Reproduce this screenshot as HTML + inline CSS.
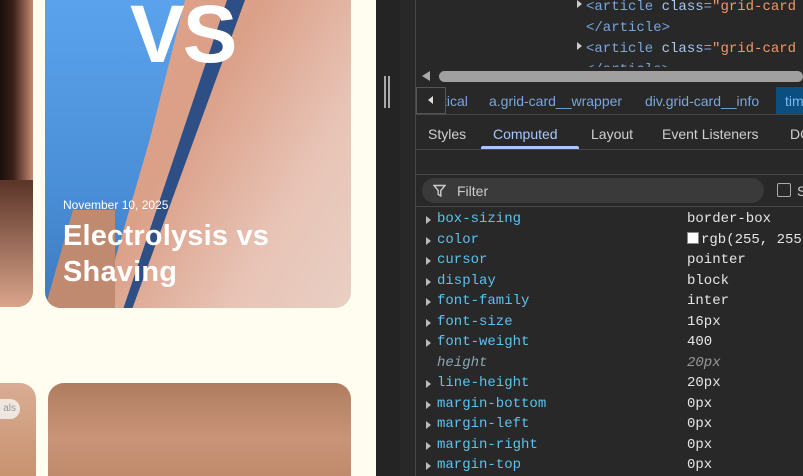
<!DOCTYPE html>
<html style="overflow:hidden;width:803px;height:476px"><head><style>
*{margin:0;padding:0;box-sizing:border-box}
body{width:803px;height:476px;overflow:hidden;background:#fffdf0;position:relative;font-family:"Liberation Sans",sans-serif}
.a{position:absolute}
.mono{font-family:"Liberation Mono","DejaVu Sans Mono",monospace;font-size:14px}
.row{position:absolute;left:416px;width:387px;height:20px}
.row .t{position:absolute;left:10px;top:6px;width:0;height:0;border-left:5px solid #bbb;border-top:4px solid transparent;border-bottom:4px solid transparent}
.row .p{position:absolute;left:21px;top:1px;color:#5cc3ef}
.row .v{position:absolute;left:271px;top:1px;color:#e6e6e6}
</style></head><body>
<div class="a" style="left:0;top:0;width:33px;height:307px;border-radius:0 0 16px 0;background:linear-gradient(90deg,#1a0f0b 0%,#3a2018 40%,#c48a70 100%);overflow:hidden">
<div class="a" style="left:0;top:180px;width:33px;height:127px;background:linear-gradient(180deg,#5a3428,#d9a48a)"></div></div>
<div class="a" style="left:45px;top:0;width:306px;height:308px;border-radius:0 0 16px 16px;overflow:hidden;background:linear-gradient(120deg,#e0a38a 0%,#dba088 45%,#e8c4b6 75%,#e9cfc4 100%)">
<div class="a" style="left:0;top:0;width:140px;height:308px;background:linear-gradient(180deg,#5aa3ec,#4a8fd8 60%,#3d7ac0);clip-path:polygon(0 0,100% 0,75% 45%,40% 100%,0 100%)"></div>
<div class="a" style="left:0;top:210px;width:70px;height:98px;background:#c08a70;clip-path:polygon(40% 0,100% 0,100% 100%,0 100%)"></div>
<div class="a" style="left:50px;top:0;width:150px;height:308px;background:#2e4e86;clip-path:polygon(88% 0,100% 0,25% 100%,19% 100%)"></div>
<div class="a" style="left:85px;top:-20px;font-size:82px;font-weight:bold;color:#fff;letter-spacing:-2px;line-height:110px">VS</div>
<div class="a" style="left:18px;top:198px;color:#fff;font-size:12px">November 10, 2025</div>
<div class="a" style="left:18px;top:218px;color:#fff;font-size:29px;font-weight:bold;line-height:36px;letter-spacing:0.2px">Electrolysis vs<br>Shaving</div>
</div>
<div class="a" style="left:-20px;top:383px;width:56px;height:93px;border-radius:16px 16px 0 0;background:linear-gradient(180deg,#d9ad94,#c8936f)"></div>
<div class="a" style="left:-10px;top:399px;width:30px;height:20px;border-radius:10px;background:#efe6e0;color:#999;font-size:10px;line-height:20px;text-align:right;padding-right:4px">als</div>
<div class="a" style="left:48px;top:383px;width:303px;height:93px;border-radius:16px 16px 0 0;background:linear-gradient(180deg,#b07c60,#c99478 60%,#c08a6c)"></div>
<div class="a" style="left:376px;top:0;width:427px;height:476px;background:#282828"></div>
<div class="a" style="left:376px;top:0;width:24px;height:476px;background:#242424"></div>
<div class="a" style="left:384px;top:76px;width:2px;height:32px;background:#aaa"></div>
<div class="a" style="left:388px;top:76px;width:2px;height:32px;background:#aaa"></div>
<div class="a" style="left:415px;top:0;width:1px;height:476px;background:#474747"></div>
<div class="a mono" style="left:586px;top:-3px;color:#7aa6da;white-space:nowrap;line-height:21px;font-size:14px;height:70px;overflow:hidden">
<div>&lt;article <span style="color:#a8c8f0">class</span>=<span style="color:#f29766">"grid-card s</span></div>
<div>&lt;/article&gt;</div>
<div>&lt;article <span style="color:#a8c8f0">class</span>=<span style="color:#f29766">"grid-card b</span></div>
<div>&lt;/article&gt;</div></div>
<div class="a" style="left:577px;top:0;border-left:5px solid #ccc;border-top:4px solid transparent;border-bottom:4px solid transparent"></div>
<div class="a" style="left:577px;top:42px;border-left:5px solid #ccc;border-top:4px solid transparent;border-bottom:4px solid transparent"></div>
<div class="a" style="left:416px;top:68px;width:387px;height:18px;background:#282828"></div>
<div class="a" style="left:422px;top:71px;border-right:8px solid #aaa;border-top:5px solid transparent;border-bottom:5px solid transparent"></div>
<div class="a" style="left:439px;top:71px;width:364px;height:11px;border-radius:6px;background:#a0a0a0"></div>
<div class="a" style="left:416px;top:87px;width:387px;height:28px;background:#282828;border-bottom:1px solid #474747;font-size:14px;white-space:nowrap">
<span class="a" style="left:27px;top:6px;color:#7aa6da">tical</span>
<div class="a" style="left:0;top:0;width:30px;height:27px;border:1px solid #555;background:#282828"></div>
<div class="a" style="left:12px;top:9px;border-right:5px solid #ddd;border-top:4px solid transparent;border-bottom:4px solid transparent"></div>
<span class="a" style="left:73px;top:6px;color:#7aa6da">a.grid-card__wrapper</span>
<span class="a" style="left:229px;top:6px;color:#7aa6da">div.grid-card__info</span>
<div class="a" style="left:360px;top:0;width:27px;height:27px;background:#0a4f80;color:#7ab8f0;padding:6px 0 0 9px;overflow:hidden">tim</div></div>
<div class="a" style="left:416px;top:116px;width:387px;height:34px;border-bottom:1px solid #474747;font-size:14px;color:#d0d0d0;white-space:nowrap;overflow:hidden">
<span class="a" style="left:12px;top:10px">Styles</span>
<span class="a" style="left:77px;top:10px;color:#a8c7fa">Computed</span>
<div class="a" style="left:65px;top:30px;width:98px;height:3px;border-radius:2px 2px 0 0;background:#a8c7fa"></div>
<span class="a" style="left:175px;top:10px">Layout</span>
<span class="a" style="left:246px;top:10px">Event Listeners</span>
<span class="a" style="left:374px;top:10px">DO</span></div>
<div class="a" style="left:416px;top:174px;width:387px;height:1px;background:#474747"></div>
<div class="a" style="left:422px;top:178px;width:342px;height:25px;border-radius:13px;background:#3a3a3a;color:#ccc;font-size:14px">
<svg class="a" style="left:11px;top:6px" width="13" height="13" viewBox="0 0 13 13"><path d="M1 1.5h11L7.8 6.5V12L5.2 10.5V6.5z" fill="none" stroke="#ccc" stroke-width="1.4"/></svg>
<span class="a" style="left:35px;top:5px">Filter</span></div>
<div class="a" style="left:777px;top:183px;width:14px;height:14px;border:1.5px solid #aaa;border-radius:2px"></div>
<span class="a" style="left:797px;top:183px;color:#ccc;font-size:14px">S</span>
<div class="a" style="left:416px;top:206px;width:387px;height:1px;background:#474747"></div>
<div class="a" style="left:416px;top:207px;width:387px;height:269px;overflow:hidden">
<div class="row mono" style="left:0;top:3px"><i class="t"></i><span class="p">box-sizing</span><span class="v">border-box</span></div>
<div class="row mono" style="left:0;top:24px"><i class="t"></i><span class="p">color</span><span class="v"><span style="display:inline-block;width:12px;height:12px;background:#fff;border:1px solid #888;vertical-align:-1px;margin-right:2px"></span>rgb(255, 255</span></div>
<div class="row mono" style="left:0;top:44px"><i class="t"></i><span class="p">cursor</span><span class="v">pointer</span></div>
<div class="row mono" style="left:0;top:65px"><i class="t"></i><span class="p">display</span><span class="v">block</span></div>
<div class="row mono" style="left:0;top:85px"><i class="t"></i><span class="p">font-family</span><span class="v">inter</span></div>
<div class="row mono" style="left:0;top:106px"><i class="t"></i><span class="p">font-size</span><span class="v">16px</span></div>
<div class="row mono" style="left:0;top:126px"><i class="t"></i><span class="p">font-weight</span><span class="v">400</span></div>
<div class="row mono" style="left:0;top:147px"><span class="p" style="color:#8aa6b8;font-style:italic">height</span><span class="v" style="color:#999;font-style:italic">20px</span></div>
<div class="row mono" style="left:0;top:167px"><i class="t"></i><span class="p">line-height</span><span class="v">20px</span></div>
<div class="row mono" style="left:0;top:188px"><i class="t"></i><span class="p">margin-bottom</span><span class="v">0px</span></div>
<div class="row mono" style="left:0;top:208px"><i class="t"></i><span class="p">margin-left</span><span class="v">0px</span></div>
<div class="row mono" style="left:0;top:229px"><i class="t"></i><span class="p">margin-right</span><span class="v">0px</span></div>
<div class="row mono" style="left:0;top:249px"><i class="t"></i><span class="p">margin-top</span><span class="v">0px</span></div>
</div>
</body></html>
